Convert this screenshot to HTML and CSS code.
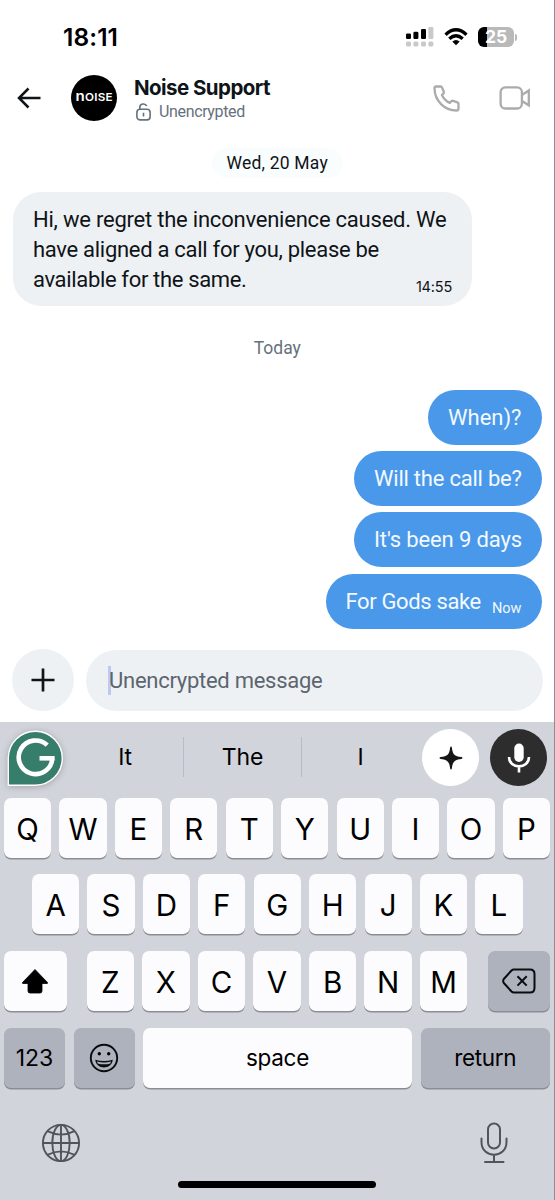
FILE: index.html
```html
<!DOCTYPE html>
<html lang="en">
<head>
<meta charset="utf-8">
<title>Noise Support</title>
<link rel="stylesheet" href="styles.css">
</head>
<body>
<div class="phone">
  <div class="status">
    <span class="time">18:11</span>
    <div class="indicators">
      <svg class="signal" width="29" height="21" viewBox="0 0 29 21">
        <g fill="#000"><rect x="1" y="6.5" width="5" height="5.5" rx="1.3"/><rect x="8.4" y="4.8" width="5" height="7.2" rx="1.3"/><rect x="16" y="2" width="5" height="10" rx="1.3"/></g>
        <g fill="#c9c9c9"><rect x="23.4" y="0" width="5" height="12" rx="1.3"/><rect x="1" y="14.5" width="5" height="5" rx="1.5"/><rect x="8.4" y="14.5" width="5" height="5" rx="1.5"/><rect x="16" y="14.5" width="5" height="5" rx="1.5"/><rect x="23.4" y="14.5" width="5" height="5" rx="1.5"/></g>
      </svg>
      <svg class="wifi" width="24" height="18" viewBox="0 0 24 18" fill="none" stroke="#000" stroke-width="3.3">
        <path d="M1.500 6.700Q12-3 22.500 6.700"/><path d="M5.300 10.700Q12 4.700 18.700 10.700"/><path d="M8.300 13.400Q12 10.400 15.700 13.400L12 17.300Z" fill="#000" stroke="none"/>
      </svg>
      <div class="battery"><span class="level">25</span></div>
      <span class="battery-tip"></span>
    </div>
  </div>

  <header class="header">
    <svg class="back" width="24" height="22" viewBox="0 0 24 22" fill="none" stroke="#0f1419" stroke-width="2.500"><path d="M23.500 11H2M11.500 1.500L2 11L11.500 20.500"/></svg>
    <div class="avatar"><span class="brand"><span class="brand-n">n</span>OISE</span></div>
    <div class="contact">
      <div class="name">Noise Support</div>
      <div class="security">
        <svg width="15" height="18" viewBox="0 0 15 18" fill="none" stroke="#65717c" stroke-width="1.600"><rect x=".9" y="6.200" width="13.200" height="10.700" rx="3.200"/><path d="M3.800 6.200V4.500C3.800 .2 9.400 0 10.700 3M7.500 9.700V13.500"/></svg>
        <span>Unencrypted</span>
      </div>
    </div>
    <svg class="call" width="27" height="27" viewBox="0 0 27 27" fill="none" stroke="#aaabad" stroke-width="2.300" stroke-linejoin="round"><path d="M3.200 1.500H7.600Q8.700 1.500 9.100 2.600L10.800 6.800Q11.200 7.900 10.300 8.700L8.900 10C10.400 13.400 13.100 16.200 16.800 17.900L18.400 16.300Q19.100 15.500 20.200 15.900L24.400 17.300Q25.500 17.700 25.500 18.800V23.500Q25.500 25.500 23.500 25.500C11.300 25.300 1.800 16 1.500 3.400Q1.500 1.500 3.200 1.500Z"/></svg>
    <svg class="video" width="32" height="24" viewBox="0 0 32 24" fill="none" stroke="#aaabad" stroke-width="2.300"><rect x="1.600" y="1.300" width="21.300" height="21.200" rx="4.800"/><path d="M23 9L29.800 4.500V19.300L23 15"/></svg>
  </header>

  <main class="thread">
    <div class="date-pill"><span>Wed, 20 May</span></div>
    <div class="bubble incoming">
      <p><span class="l1">Hi, we regret the inconvenience caused. We</span><br><span class="l2">have aligned a call for you, please be</span><br><span class="l3">available for the same.</span></p>
      <span class="sent-time">14:55</span>
    </div>
    <div class="today"><span>Today</span></div>
    <div class="outgoing">
      <div class="bubble out b1"><span>When)?</span></div>
      <div class="bubble out b2"><span>Will the call be?</span></div>
      <div class="bubble out b3"><span>It's been 9 days</span></div>
      <div class="bubble out b4"><span>For Gods sake</span><small>Now</small></div>
    </div>
  </main>

  <div class="composer">
    <div class="add"><svg width="24" height="24" viewBox="0 0 24 24" stroke="#0f1419" stroke-width="2.700"><path d="M12 .5V23.500M.5 12H23.500"/></svg></div>
    <div class="field"><i class="caret"></i><span>Unencrypted message</span></div>
  </div>

  <section class="keyboard">
    <div class="suggestions">
      <svg class="grammarly" width="60" height="60" viewBox="0 0 60 60"><path d="M3.300 57.200V30A27 27 0 1 1 30.300 57.200Z" fill="#377d6c" stroke="#fff" stroke-width="1.400"/><path d="M42.200 17.200A16.800 16.800 0 1 0 47.300 30.300" fill="none" stroke="#fff" stroke-width="4.600"/><path d="M34.500 30.300H49.600" stroke="#fff" stroke-width="4.600"/></svg>
      <div class="word">It</div>
      <div class="word mid">The</div>
      <div class="word last">I</div>
      <div class="round spark"><svg width="24" height="24" viewBox="0 0 24 24" fill="#161616"><path d="M12 .5Q12.700 .5 12.900 1.700C13.700 8.500 15.500 10.300 22.300 11.100Q23.500 11.300 23.500 12T22.300 12.900C15.500 13.700 13.700 15.500 12.900 22.300Q12.700 23.500 12 23.500T11.100 22.300C10.300 15.500 8.500 13.700 1.700 12.900Q.5 12.700 .5 12T1.700 11.100C8.500 10.300 10.300 8.500 11.100 1.700Q11.300 .5 12 .5Z"/></svg></div>
      <div class="round mic"><svg width="24" height="30" viewBox="0 0 24 30"><rect x="7.300" y=".5" width="9.400" height="18.500" rx="4.700" fill="#fff"/><path d="M2 14C2 26.500 22 26.500 22 14M12 23V29.500" fill="none" stroke="#fff" stroke-width="2.600"/></svg></div>
    </div>
    <div class="row"><b>Q</b><b>W</b><b>E</b><b>R</b><b>T</b><b>Y</b><b>U</b><b>I</b><b>O</b><b>P</b></div>
    <div class="row inset"><b>A</b><b>S</b><b>D</b><b>F</b><b>G</b><b>H</b><b>J</b><b>K</b><b>L</b></div>
    <div class="row third">
      <b class="shift"><svg width="28" height="26" viewBox="0 0 28 26"><path d="M14 1.500L26.500 14.500Q27 15.500 26 15.500H21V23Q21 25 19 25H9Q7 25 7 23V15.500H2Q1 15.500 1.500 14.500Z" stroke="#000" stroke-width=".8" stroke-linejoin="round"/></svg></b>
      <div class="letters"><b>Z</b><b>X</b><b>C</b><b>V</b><b>B</b><b>N</b><b>M</b></div>
      <b class="gray delete"><svg width="34" height="26" viewBox="0 0 34 26" fill="none" stroke="#0a0c10" stroke-width="2" stroke-linejoin="round"><path d="M12 1.500H28Q32.500 1.500 32.500 6V20Q32.500 24.500 28 24.500H12Q10.500 24.500 9.500 23.500L1.800 15Q.5 13 1.800 11L9.500 2.500Q10.500 1.500 12 1.500Z"/><path d="M15.500 8.200L24.700 17.600M24.700 8.200L15.500 17.600"/></svg></b>
    </div>
    <div class="row fourth">
      <b class="gray label num">123</b>
      <b class="gray"><svg width="30" height="30" viewBox="0 0 30 30"><circle cx="15" cy="15" r="13.200" fill="none" stroke="#0a0c10" stroke-width="1.900"/><circle cx="10.300" cy="10.800" r="1.700"/><circle cx="19.700" cy="10.800" r="1.700"/><path d="M6.200 16.700Q15 19.400 23.800 16.700C22.500 27 7.500 27 6.200 16.700Z" fill="#0a0c10"/><path d="M8 18.500Q15 20.500 22 18.500L21.300 20.400Q15 22.200 8.700 20.400Z" fill="#adb2bd"/></svg></b>
      <b class="label space">space</b>
      <b class="gray label return">return</b>
    </div>
    <div class="dock">
      <svg width="40" height="40" viewBox="0 0 40 40" fill="none" stroke="#51545b" stroke-width="1.900"><circle cx="20" cy="20" r="18.100"/><ellipse cx="20" cy="20" rx="8.700" ry="18.100"/><path d="M20 2V38M2 20H38M6.500 8.200Q20 15 33.500 8.200M6.500 31.800Q20 25 33.500 31.800"/></svg>
      <svg width="28" height="42" viewBox="0 0 28 42" fill="none" stroke="#51545b" stroke-width="2"><rect x="8" y="1.500" width="12" height="25" rx="6"/><path d="M1.500 16.500V20C1.500 37 26.500 37 26.500 20V16.500M14 33V40M5 40H23.500" stroke-linecap="round"/></svg>
    </div>
    <div class="home"></div>
  </section>
</div>
</body>
</html>
```
FILE: styles.css
```css
* { box-sizing: border-box; }
body { margin: 0; background: #fff; font-family: Roboto, "Liberation Sans", sans-serif; color: #0f1419; }
.phone { width: 555px; height: 1200px; border-right: 1px solid #8d8f93; overflow: hidden; display: flex; flex-direction: column; }
span { white-space: nowrap; }
svg { display: block; flex: none; }

.status { height: 68px; padding: 23px 37px 0 63px; display: flex; align-items: flex-start; justify-content: space-between; }
.time { font: 600 24.500px/29px Inter, sans-serif; color: #000; letter-spacing: .1px; }
.indicators { display: flex; align-items: flex-start; padding-top: 4px; }
.wifi { margin: 1px 0 0 10px; }
.battery { width: 36px; height: 20px; margin-left: 10px; border-radius: 6px; background: linear-gradient(90deg, #000 9px, #b9b9b9 9px); color: #fff; font: 700 17.500px/20px Inter, sans-serif; text-align: center; }
.battery-tip { width: 2px; height: 7px; margin: 7px 0 0 1px; border-radius: 0 2px 2px 0; background: #b9b9b9; }

.header { height: 62px; padding: 7px 23px 0 17px; display: flex; align-items: flex-start; }
.back { margin-top: 12px; }
.avatar { width: 46px; height: 46px; margin-left: 30px; border-radius: 50%; background: #000; color: #fff; display: flex; align-items: center; justify-content: center; }
.brand { font: 600 10.800px/14px Inter, sans-serif; letter-spacing: .2px; transform: translateY(-1px) scaleX(1.080); }
.brand-n { font-size: 14px; }
.contact { margin: 0 auto 0 17px; }
.name { font: 700 20.500px/26px Inter, sans-serif; letter-spacing: -.55px; }
.security { display: flex; align-items: center; gap: 8px; margin: 0 0 0 2px; color: #65717c; font-size: 16px; line-height: 22px; letter-spacing: -.35px; }
.call { margin: 10px 39px 0 0; }
.video { margin-top: 11px; }

.thread { height: 512px; padding: 18px 12.500px 0 13px; display: flex; flex-direction: column; }
.date-pill { align-self: center; height: 30px; padding: 0 15px; border-radius: 15px; background: #f9fdfe; font-size: 17.500px; line-height: 30px; letter-spacing: .2px; }
.bubble { border-radius: 28px; font-size: 22px; }
.incoming { width: 459px; height: 114px; margin-top: 14px; padding: 13px 20px 0; background: #eef1f3; display: flex; justify-content: space-between; }
.incoming p { margin: 0; width: 0; line-height: 30px; }
.l1 { letter-spacing: -.22px; }
.l2 { letter-spacing: -.29px; }
.l3 { letter-spacing: -.34px; }
.sent-time { margin-top: 71.500px; font: 14.500px/20px Inter, sans-serif; letter-spacing: -.2px; }
.today { margin-top: 32px; text-align: center; font-size: 17.500px; line-height: 21px; color: #65717c; }
.outgoing { display: flex; flex-direction: column; align-items: flex-end; gap: 6.200px; margin-top: 31px; }
.out { height: 55px; padding: 0 20px; background: #4a98e9; color: #f3f9ff; line-height: 55px; display: flex; justify-content: space-between; }
.b1 { width: 113.500px; }
.b2, .b3 { width: 187.500px; }
.b2 span { letter-spacing: -.23px; }
.b3 span { letter-spacing: -.13px; }
.b4 { width: 216px; }
.b4 span { letter-spacing: -.36px; }
.out small { font-size: 14.500px; line-height: 70px; }

.composer { height: 80px; padding: 7px 11px 11px 12px; display: flex; gap: 12px; align-items: center; }
.add { width: 62px; height: 62px; border-radius: 50%; background: #eef1f3; display: grid; place-items: center; }
.field { flex: 1; height: 61px; border-radius: 31px; background: #eef1f3; padding-left: 22px; display: flex; align-items: center; color: #5c6570; font-size: 22px; letter-spacing: -.27px; }
.caret { width: 3px; height: 29px; margin-right: -2px; background: #bdc9f2; }

.keyboard { height: 478px; background: #d1d4db; }
.suggestions { height: 75.500px; padding: 6px 7px 0 5px; display: flex; align-items: flex-start; }
.grammarly { filter: drop-shadow(0 1px 3px rgba(90, 70, 90, .35)); }
.word { width: 118px; height: 40px; margin-top: 9px; color: #000; font: 23px/40px Inter, sans-serif; text-align: center; border-right: 1px solid #b9bcc4; letter-spacing: -.2px; }
.suggestions .grammarly + .word { width: 119px; padding-left: 2px; }
.word.last { border: 0; width: 117px; }
.round { width: 57px; height: 57px; margin-top: 1px; border-radius: 50%; display: grid; place-items: center; flex: none; }
.spark { margin-left: 3px; background: #fff; }
.mic { margin-left: 11px; background: #2d2d2d; }
.row { height: 60px; margin: 0 4px 16.800px; display: grid; grid-template-columns: repeat(10, 1fr); gap: 8.300px; }
.row.inset { grid-template-columns: repeat(9, 1fr); margin-left: 32px; margin-right: 31.500px; }
.row.third { grid-template-columns: 62.500px 380.500px 62.500px; gap: 0; justify-content: space-between; }
.letters { display: grid; grid-template-columns: repeat(7, 1fr); gap: 8.300px; }
.row.fourth { grid-template-columns: 61px 61px 269px 1fr; gap: 8.500px; margin-bottom: 0; }
.row b { display: grid; place-items: center; border-radius: 7px; background: #fcfcfe; box-shadow: 0 1.500px 0 #8b8d93; color: #000; font: 29.500px/62px Inter, sans-serif; height: 60px; }
.row .gray { background: #adb2bd; }
.row .label { font-size: 22.500px; line-height: 60px; letter-spacing: -.3px; }
.row .num { font-size: 23px; letter-spacing: 0; }
.row .return { line-height: 57px; }
.dock { display: flex; justify-content: space-between; align-items: center; padding: 34px 46px 0 41px; }
.home { width: 198px; height: 7px; border-radius: 4px; background: #000; margin: 17.500px auto 0; }
```
